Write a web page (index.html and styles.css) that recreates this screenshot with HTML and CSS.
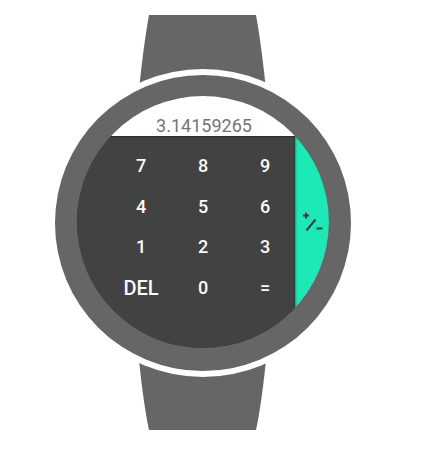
FILE: index.html
```html
<!DOCTYPE html>
<html>
<head>
<meta charset="utf-8">
<link rel="stylesheet" href="styles.css">
</head>
<body>
<div class="stage">
  <svg class="straps" width="428" height="450" viewBox="0 0 428 450">
    <path d="M149,15 L256,15 Q262,48 267,100 L138,100 Q143,48 149,15 Z" fill="#666666"/>
    <path d="M138,350 L267,350 Q262,402 256,430 L149,430 Q143,402 138,350 Z" fill="#666666"/>
  </svg>
  <div class="bezel">
    <div class="screen">
      <div class="display">3.14159265</div>
      <div class="body">
        <div class="keypad">
          <div class="key">7</div><div class="key">8</div><div class="key">9</div>
          <div class="key">4</div><div class="key">5</div><div class="key">6</div>
          <div class="key">1</div><div class="key">2</div><div class="key">3</div>
          <div class="key key-del">DEL</div><div class="key">0</div><div class="key">=</div>
        </div>
        <div class="side">
          <svg class="pm" width="22" height="22" viewBox="0 0 22 22">
            <path d="M4,1.5 V7.5 M1,4.5 H7" stroke="#3d3d3d" stroke-width="2" fill="none"/>
            <path d="M4.5,19.5 L13.5,8.5" stroke="#3d3d3d" stroke-width="2" fill="none"/>
            <path d="M14.5,17.5 H20.5" stroke="#3d3d3d" stroke-width="2" fill="none"/>
          </svg>
        </div>
      </div>
    </div>
  </div>
</div>
</body>
</html>
```

FILE: styles.css
```css
html, body {
  margin: 0;
  padding: 0;
  background: #ffffff;
}

.stage {
  position: relative;
  width: 428px;
  height: 450px;
  overflow: hidden;
  font-family: Roboto, "Liberation Sans", sans-serif;
}

.straps {
  position: absolute;
  left: 0;
  top: 0;
}

.bezel {
  position: relative;
  width: 296px;
  height: 296px;
  margin-left: 55px;
  margin-top: 0;
  top: 75px;
  box-sizing: border-box;
  padding: 21px 22px 23px 22px;
  border-radius: 50%;
  background: #666666;
  box-shadow: 0 0 0 6px #ffffff;
}

.screen {
  width: 252px;
  height: 252px;
  border-radius: 50%;
  overflow: hidden;
  background: #424242;
  display: flex;
  flex-direction: column;
}

.display {
  height: 40px;
  flex: none;
  box-sizing: border-box;
  background: #ffffff;
  color: #757575;
  font-size: 18px;
  line-height: 18px;
  text-align: center;
  padding-top: 21px;
  padding-left: 2px;
}

.body {
  flex: 1;
  display: flex;
}

.keypad {
  width: 218px;
  flex: none;
  box-sizing: border-box;
  padding-top: 10px;
  padding-left: 33px;
  display: grid;
  grid-template-columns: repeat(3, 62px);
  grid-auto-rows: 40.5px;
  background: #424242;
  box-shadow: 0 1px 2px rgba(0, 0, 0, 0.35) inset;
  position: relative;
  z-index: 1;
}

.key {
  display: flex;
  align-items: center;
  justify-content: center;
  color: #fafafa;
  font-size: 18px;
  line-height: 18px;
  font-weight: 500;
}

.key-del {
  font-size: 20px;
}

.side {
  flex: 1;
  background: #1de9b6;
  box-shadow: 1px 0 2px rgba(0, 0, 0, 0.35) inset;
  display: flex;
  align-items: center;
  justify-content: center;
  padding-bottom: 40px;
  padding-left: 2px;
}

.pm {
  display: block;
}
```
